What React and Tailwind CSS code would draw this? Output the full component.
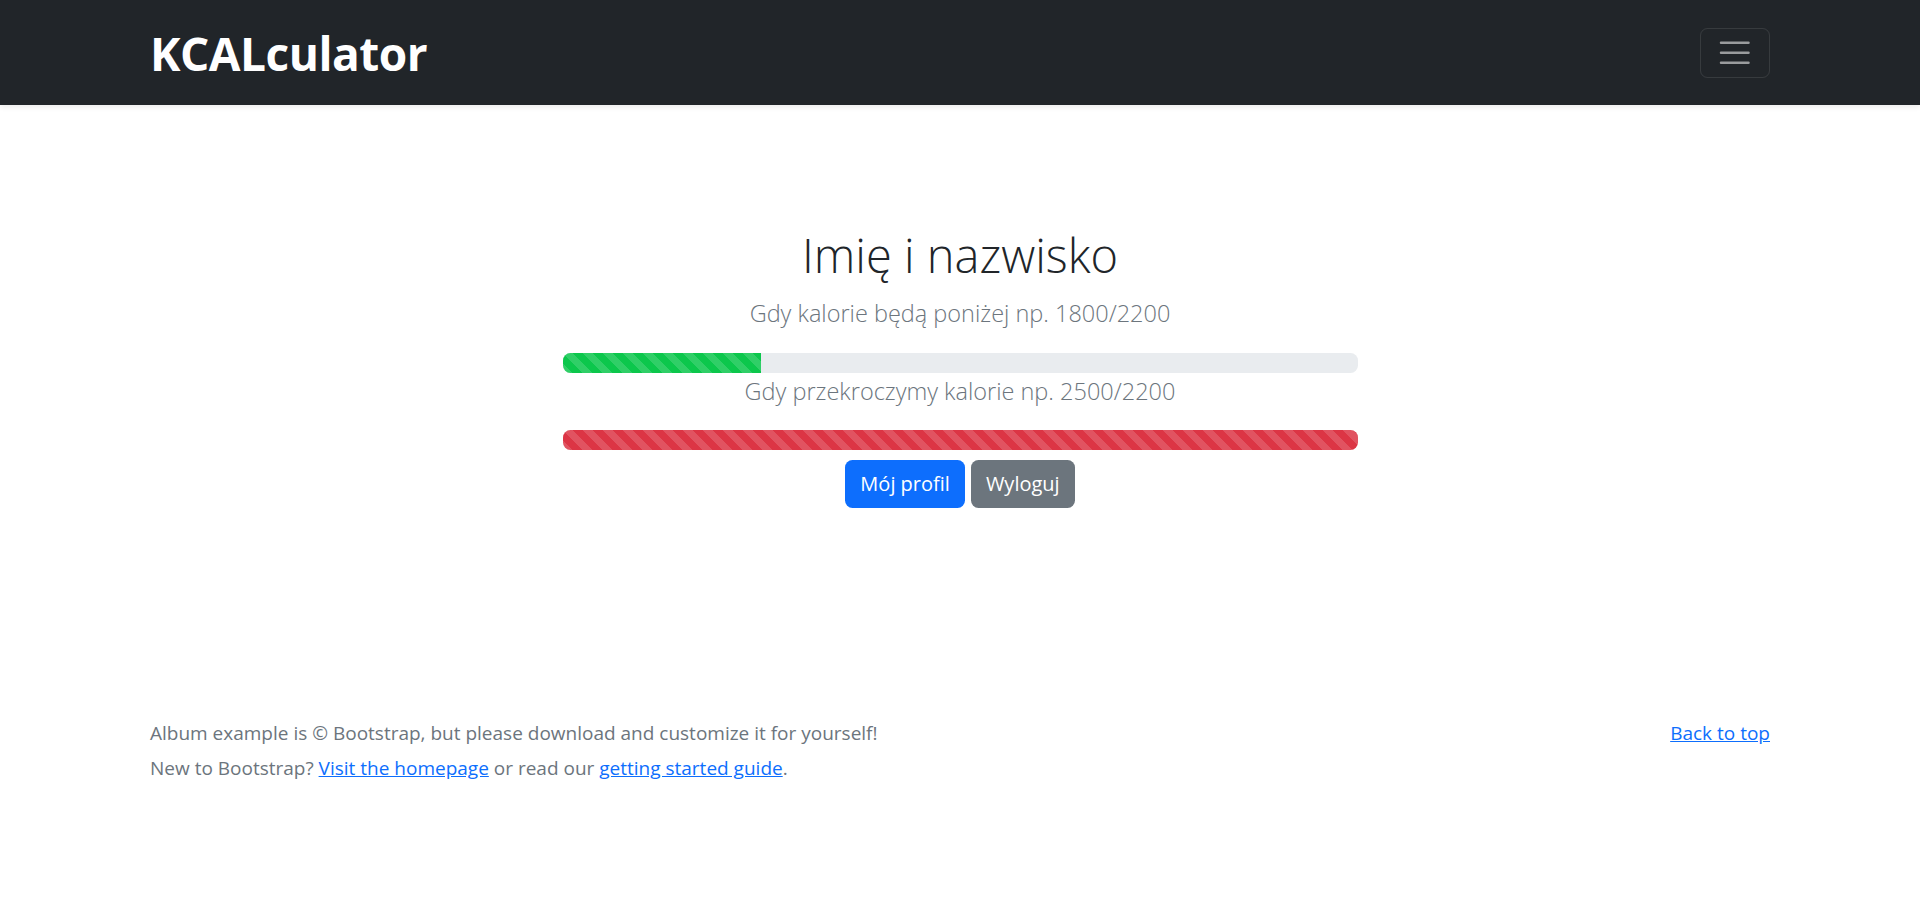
import React from 'react'

const stripes =
  'bg-[linear-gradient(45deg,rgba(255,255,255,.15)_25%,transparent_25%,transparent_50%,rgba(255,255,255,.15)_50%,rgba(255,255,255,.15)_75%,transparent_75%,transparent)] [background-size:20px_20px]'

function Hamburger() {
  return (
    <svg width="37.5" height="37.5" viewBox="0 0 30 30" aria-hidden="true">
      <path
        d="M4 7h22M4 15h22M4 23h22"
        stroke="rgba(255,255,255,0.55)"
        strokeLinecap="round"
        strokeMiterlimit="10"
        strokeWidth="2"
      />
    </svg>
  )
}

export default function App() {
  return (
    <div className="min-h-[901px] bg-white font-['Open_Sans',sans-serif] text-[20px] leading-[30px] text-[#212529]">
      <header className="bg-[#212529] shadow-[0_2.5px_5px_rgba(0,0,0,0.075)] relative">
        <div className="mx-[150px] h-[105px] flex items-center justify-between">
          <a href="#" className="text-white font-bold text-[46px] leading-none tracking-[-0.5px]">
            KCALculator
          </a>
          <button className="w-[70px] h-[50px] flex items-center justify-center rounded-[7.5px] border border-white/10">
            <Hamburger />
          </button>
        </div>
      </header>

      <main>
        <section className="py-[120px] text-center">
          <div className="w-[795px] mx-auto">
            <h1 className="font-light text-[47px] leading-[60px] mb-[10px]">Imię i nazwisko</h1>
            <p className="font-light text-[23.5px] leading-[37.5px] text-[#6c757d] mb-[20px]">
              Gdy kalorie będą poniżej np. 1800/2200
            </p>
            <div className="h-[20px] rounded-[7.5px] bg-[#e9ecef] overflow-hidden flex">
              <div className={`w-1/4 h-full bg-[#0cc74c] ${stripes}`}></div>
            </div>
            <p className="font-light text-[23.5px] leading-[37.5px] text-[#6c757d] mb-[20px]">
              Gdy przekroczymy kalorie np. 2500/2200
            </p>
            <div className="h-[20px] rounded-[7.5px] bg-[#e9ecef] overflow-hidden flex">
              <div className={`w-full h-full bg-[#dc3545] ${stripes}`}></div>
            </div>
            <div className="flex justify-center gap-[6px] mt-[10px] mb-[30px]">
              <a
                href="#"
                className="px-[15px] h-[47.5px] flex items-center rounded-[7.5px] bg-[#0d6efd] text-white"
              >
                Mój profil
              </a>
              <a
                href="#"
                className="px-[15px] h-[47.5px] flex items-center rounded-[7.5px] bg-[#6c757d] text-white"
              >
                Wyloguj
              </a>
            </div>
          </div>
        </section>
      </main>

      <footer className="py-[60px] text-[#6c757d] text-[19px]">
        <div className="mx-[150px]">
          <div className="flex justify-between mb-[5px]">
            <p>Album example is © Bootstrap, but please download and customize it for yourself!</p>
            <a href="#" className="text-[#0d6efd] underline">Back to top</a>
          </div>
          <p>
            New to Bootstrap?{' '}
            <a href="#" className="text-[#0d6efd] underline">Visit the homepage</a> or read our{' '}
            <a href="#" className="text-[#0d6efd] underline">getting started guide</a>.
          </p>
        </div>
      </footer>
    </div>
  )
}
